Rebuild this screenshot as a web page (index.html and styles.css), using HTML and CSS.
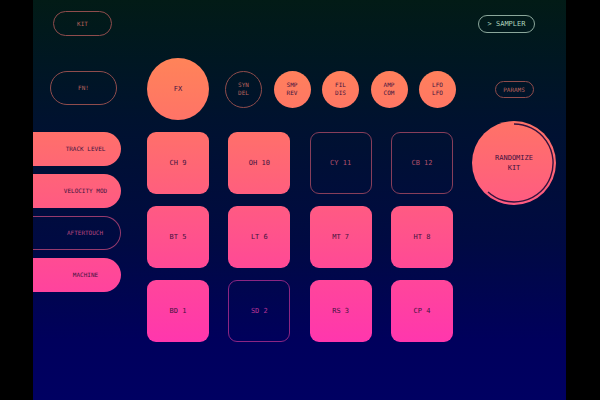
FILE: index.html
```html
<!DOCTYPE html>
<html lang="en">
<head>
<meta charset="utf-8">
<meta name="viewport" content="width=device-width, initial-scale=1">
<title>Sampler</title>
<link rel="stylesheet" href="styles.css">
</head>
<body>
<main class="panel">
  <header class="bar">
    <button class="key outline kit">KIT</button>
    <button class="key sampler">&gt; SAMPLER</button>
  </header>
  <div class="columns">
    <section class="side">
      <button class="key outline fn">FN!</button>
      <div class="tabs">
        <button class="key tab">TRACK LEVEL</button>
        <button class="key tab">VELOCITY MOD</button>
        <button class="key tab outline rose">AFTERTOUCH</button>
        <button class="key tab">MACHINE</button>
      </div>
    </section>
    <section class="center">
      <div class="effects">
        <button class="key fx">FX</button>
        <div class="rounds">
          <button class="key round outline">SYN<br>DEL</button>
          <button class="key round">SMP<br>REV</button>
          <button class="key round">FIL<br>DIS</button>
          <button class="key round">AMP<br>COM</button>
          <button class="key round">LFO<br>LFO</button>
        </div>
      </div>
      <div class="pads">
        <button class="key pad">CH 9</button>
        <button class="key pad">OH 10</button>
        <button class="key pad outline coral">CY 11</button>
        <button class="key pad outline coral">CB 12</button>
        <button class="key pad">BT 5</button>
        <button class="key pad">LT 6</button>
        <button class="key pad">MT 7</button>
        <button class="key pad">HT 8</button>
        <button class="key pad">BD 1</button>
        <button class="key pad outline magenta">SD 2</button>
        <button class="key pad">RS 3</button>
        <button class="key pad">CP 4</button>
      </div>
    </section>
    <section class="actions">
      <button class="key outline params">PARAMS</button>
      <button class="key randomize">
        <svg class="progress" viewBox="0 0 84 84" aria-hidden="true"><path d="M42 3A39 39 0 1 1 16 71"/></svg>
        <span>RANDOMIZE<br>KIT</span>
      </button>
    </section>
  </div>
</main>
</body>
</html>
```
FILE: styles.css
```css
* {
  box-sizing: border-box;
}

body {
  margin: 0;
  background: #000;
  font-family: "DejaVu Sans Mono", "Liberation Mono", monospace;
}

.panel {
  min-height: 100vh;
  margin: 0 34px 0 33px;
  background: linear-gradient(#021b16, #001722 15%, #00122f 30%, #000a42 60%, #00005c 85%, #000062);
}

.bar {
  display: flex;
  align-items: center;
  justify-content: space-between;
  padding: 11px 31px 0 20px;
}

.columns {
  display: grid;
  grid-template-columns: 88px minmax(0, 1fr) 84px;
  padding: 22px 10px 0 0;
}

.key {
  display: flex;
  align-items: center;
  justify-content: center;
  margin: 0;
  padding: 0;
  border: 0;
  background: linear-gradient(#ff8458 14%, #ff706a 33%, #ff5a83 52%, #ff469a 70%, #ff36ae 86%) fixed;
  color: #42133f;
  font: 7px/10px "DejaVu Sans Mono", "Liberation Mono", monospace;
  text-align: center;
  white-space: nowrap;
  cursor: pointer;
}

.outline {
  border: 1px solid #8f4c4c;
  background: none;
  color: #b9635c;
}

.coral {
  border-color: #873e5a;
  color: #b2506b;
}

.rose {
  border-color: #963a6d;
  color: #b5467f;
}

.magenta {
  border-color: #8c2583;
  color: #b63496;
}

.kit {
  width: 59px;
  height: 25px;
  border-radius: 13px;
  font-size: 6px;
}

.sampler {
  width: 57px;
  height: 18px;
  border: 1px solid #8ba79b;
  border-radius: 9px;
  background: none;
  color: #acd5bd;
}

.side {
  padding-top: 13px;
}

.fn {
  width: 67px;
  height: 34px;
  margin-left: 17px;
  border-radius: 17px;
  font-size: 6px;
}

.tabs {
  display: grid;
  gap: 8px;
  margin-top: 27px;
}

.tab {
  height: 34px;
  padding-left: 17px;
  border-left: 0;
  border-radius: 0 17px 17px 0;
  font-size: 6px;
}

.center {
  margin: 0 19px 0 26px;
}

.effects {
  display: flex;
  align-items: center;
  gap: 16px;
  margin-right: -3px;
}

.fx {
  width: 62px;
  height: 62px;
  border-radius: 50%;
}

.rounds {
  display: flex;
  flex: 1;
  justify-content: space-between;
}

.round {
  width: 37px;
  height: 37px;
  border-radius: 50%;
  font-size: 6px;
  line-height: 8px;
}

.pads {
  display: grid;
  grid-template-columns: repeat(4, 62px);
  justify-content: space-between;
  row-gap: 12px;
  margin-top: 12px;
}

.pad {
  height: 62px;
  border-radius: 9px;
}

.actions {
  display: flex;
  flex-direction: column;
  align-items: center;
  gap: 23px;
  padding-top: 23px;
}

.params {
  width: 39px;
  height: 17px;
  border-radius: 9px;
  font-size: 6px;
}

.randomize {
  position: relative;
  width: 84px;
  height: 84px;
  border-radius: 50%;
}

.progress {
  position: absolute;
  inset: 0;
  fill: none;
  stroke: #35133f;
  stroke-width: 1.4;
}
```
